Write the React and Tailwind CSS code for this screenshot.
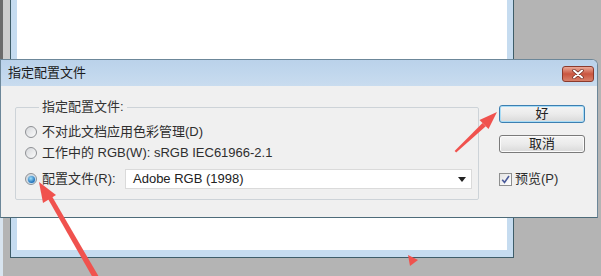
import React from "react";

const font = { fontFamily: '"Liberation Sans", "Noto Sans CJK SC", sans-serif' };

const Radio = ({ checked }) => (
  <div className="w-[12px] h-[12px] rounded-full border border-[#8e9094] bg-gradient-to-br from-[#d6d8db] to-[#fbfbfb] flex items-center justify-center shrink-0">
    {checked && (
      <div className="w-[7px] h-[7px] rounded-full bg-[radial-gradient(circle_at_40%_35%,#9ee0fb,#1f6fb8_70%)] shadow-[0_0_2px_#4aa3e0]" />
    )}
  </div>
);

const WinButton = ({ label, isDefault }) => (
  <button
    className={`w-[86px] h-[18px] rounded-[3px] border text-[13px] leading-[16px] text-[#222] bg-gradient-to-b from-[#f4f4f4] via-[#ebebeb] to-[#d9d9d9] ${
      isDefault ? "border-[#3c7fb1] shadow-[inset_0_0_0_1px_#a8dcf6]" : "border-[#7a7a7a] shadow-[inset_0_0_0_1px_#fbfbfb]"
    }`}
  >
    {label}
  </button>
);

const Arrows = () => (
  <svg className="absolute inset-0 pointer-events-none" width="601" height="276" viewBox="0 0 601 276">
    <g fill="#f0524e">
      {/* arrow to the OK button */}
      <polygon points="497,112 479.5,120 488.5,129" />
      <polygon points="482.5,123 485.8,126.2 456.2,152.6 454.6,151" />
      {/* arrow to the profile radio */}
      <polygon points="39,182 43,203 56,195" />
      <polygon points="47.5,198 51.5,195.6 99,277 93,278" />
      {/* stray arrow tip */}
      <polygon points="408,255 418,260 410,266" />
    </g>
  </svg>
);

export default function App() {
  return (
    <div className="relative w-[601px] h-[276px] overflow-hidden bg-[#b4b4b4]" style={font}>
      {/* background app frame on the left */}
      <div className="absolute left-0 top-0 w-[10px] h-full flex flex-col">
        <div className="h-[60px] border-l-[3px] border-[#6b6b6b] bg-[#cdcdcd]" />
        <div className="flex-1 border-l-[3px] border-[#d8e4ef] bg-[#b4b4b4]" />
      </div>

      {/* document window behind the dialog */}
      <div className="absolute left-[10px] top-[-10px] w-[504px] h-[268px] border-[1.5px] border-[#3e5d69] bg-[#c6dcf0] px-[6px] pb-[7px]">
        <div className="w-full h-full bg-white" />
      </div>

      {/* dialog */}
      <div className="absolute left-0 top-[59px] w-[598px] h-[159px] flex flex-col border border-[#6c8799] border-b-[#4d6b79] rounded-tr-[6px] bg-[#f0f0f0] overflow-hidden">
        <div className="h-[26px] shrink-0 flex justify-between bg-gradient-to-b from-[#bad2ea] via-[#c1d7ed] to-[#c9dcef]">
          <span className="pl-[7px] text-[13px] leading-[26px] text-[#1b1b1b]">指定配置文件</span>
          <div className="mt-[6px] mr-[3px] w-[32px] h-[16px] rounded-[3px] border border-[#8b3a2c] bg-gradient-to-b from-[#e9a897] via-[#c9553f] to-[#d8806a] flex items-center justify-center">
            <svg width="12" height="10" viewBox="0 0 12 10">
              <path d="M2 1.5 L10 8.5 M10 1.5 L2 8.5" stroke="#6a2a20" strokeWidth="3.4" strokeLinecap="round" />
              <path d="M2 1.5 L10 8.5 M10 1.5 L2 8.5" stroke="#ffffff" strokeWidth="2" strokeLinecap="round" />
            </svg>
          </div>
        </div>

        <div className="flex-1 flex pl-[14px] pt-[13px] text-[13px] leading-[16px] text-[#2e2e2e]">
          <fieldset className="w-[464px] self-start border border-[#cdd3d8] rounded-[2px] pl-[9px] pr-[6px] pb-[10px]">
            <legend className="ml-[14px] px-[3px] text-[#333]">指定配置文件:</legend>
            <div className="pt-[7px] flex flex-col">
              <div className="h-[20px] flex items-center gap-[5px]">
                <Radio />
                <span>不对此文档应用色彩管理(D)</span>
              </div>
              <div className="mt-[1px] h-[20px] flex items-center gap-[5px]">
                <Radio />
                <span>工作中的 RGB(W): sRGB IEC61966-2.1</span>
              </div>
              <div className="mt-[6px] h-[20px] flex items-center">
                <Radio checked />
                <span className="ml-[5px]">配置文件(R):</span>
                <div className="ml-auto w-[347px] h-[20px] bg-white border border-[#dadada] flex items-center justify-between pl-[7px] pr-[5px]">
                  <span className="text-[#222]">Adobe RGB (1998)</span>
                  <svg width="8" height="5" viewBox="0 0 8 5">
                    <polygon points="0,0 8,0 4,5" fill="#222" />
                  </svg>
                </div>
              </div>
            </div>
          </fieldset>

          <div className="ml-[20px] mt-[6px] flex flex-col">
            <WinButton label="好" isDefault />
            <div className="mt-[12px]">
              <WinButton label="取消" />
            </div>
            <div className="mt-[16px] h-[20px] flex items-center gap-[3px]">
              <div className="w-[13px] h-[13px] border border-[#8e8f8f] bg-gradient-to-br from-[#e4e4e4] to-white flex items-center justify-center">
                <svg width="9" height="9" viewBox="0 0 9 9">
                  <path d="M1.2 4.8 L3.5 7.4 L8 1" stroke="#4a5a9a" strokeWidth="1.6" fill="none" />
                </svg>
              </div>
              <span>预览(P)</span>
            </div>
          </div>
        </div>
      </div>

      <Arrows />
    </div>
  );
}
